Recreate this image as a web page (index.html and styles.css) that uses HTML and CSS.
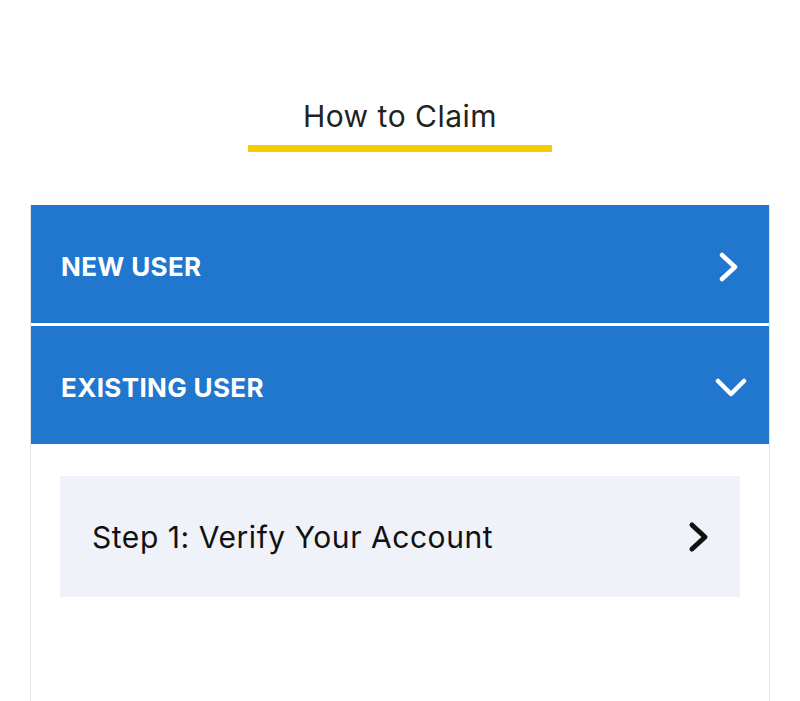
FILE: index.html
```html
<!DOCTYPE html>
<html lang="en">
<head>
  <meta charset="UTF-8">
  <meta name="viewport" content="width=device-width, initial-scale=1.0">
  <title>How to Claim</title>
  <link rel="stylesheet" href="styles.css">
</head>
<body>
  <div class="claim-header">
    <h1>How to Claim</h1>
    <div class="underline"></div>
  </div>

  <div class="accordion">
    <div class="acc-item">
      <span>NEW USER</span>
      <svg class="icon" width="24" height="32" viewBox="0 0 24 32">
        <polyline points="5,4 18,16 5,28" />
      </svg>
    </div>

    <div class="acc-item open">
      <span>EXISTING USER</span>
      <svg class="icon" width="32" height="24" viewBox="0 0 32 24">
        <polyline points="3,5 16,18 29,5" />
      </svg>
    </div>

    <div class="acc-body">
      <div class="step">
        <span>Step 1: Verify Your Account</span>
        <svg class="icon dark" width="24" height="32" viewBox="0 0 24 32">
          <polyline points="5,4 18,16 5,28" />
        </svg>
      </div>
    </div>
  </div>
</body>
</html>
```

FILE: styles.css
```css
html, body {
  height: 100%;
}

body {
  margin: 0;
  padding: 0;
  font-family: Inter, 'Noto Sans', sans-serif;
  background: white;
  color: #222;
  display: flex;
  flex-direction: column;
}

.claim-header {
  padding-top: 99px;
  display: flex;
  flex-direction: column;
  align-items: center;
}

h1 {
  margin: 0;
  font-size: 30px;
  line-height: 34px;
  font-weight: 400;
  letter-spacing: 0.5px;
  color: #222;
}

.underline {
  width: 304px;
  height: 7px;
  margin-top: 12px;
  background: #f7cb00;
}

.accordion {
  flex: 1;
  margin: 53px 30px 0;
  border-left: 1px solid #e3e6ec;
  border-right: 1px solid #e3e6ec;
  display: flex;
  flex-direction: column;
}

.acc-item {
  height: 118px;
  padding: 5px 28px 0 30px;
  background: #2177cd;
  color: white;
  font-size: 26px;
  font-weight: 700;
  letter-spacing: 0.35px;
  display: flex;
  align-items: center;
  justify-content: space-between;
  box-sizing: border-box;
}

.acc-item + .acc-item {
  margin-top: 3px;
}

.acc-item.open {
  padding-right: 22px;
}

.icon polyline {
  fill: none;
  stroke: white;
  stroke-width: 4.5;
  stroke-linecap: round;
  stroke-linejoin: round;
}

.icon.dark polyline {
  stroke: #111;
  stroke-width: 5;
}

.acc-body {
  flex: 1;
  padding: 32px 29px;
}

.step {
  height: 121px;
  padding: 0 29px 0 32px;
  background: #eff2f9;
  color: #111;
  font-size: 30px;
  letter-spacing: 0.55px;
  display: flex;
  align-items: center;
  justify-content: space-between;
}
```
